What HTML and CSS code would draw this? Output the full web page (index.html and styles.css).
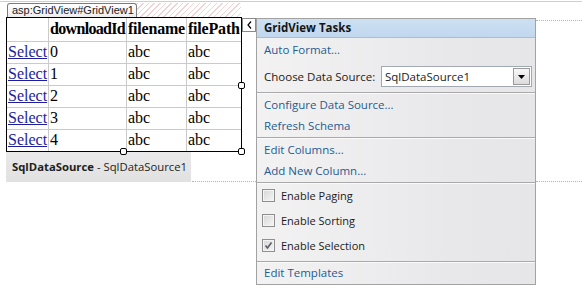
FILE: index.html
```html
<!DOCTYPE html>
<html lang="en">
<head>
    <meta charset="utf-8" />
    <title>GridView designer</title>
    <link rel="stylesheet" href="styles.css">
</head>
<body>
<div class="topline"></div>
<div class="guide guide-a"></div>
<div class="guide guide-b"></div>
<div class="guide guide-c"></div>

<div class="surface">
    <div class="tabrow">
        <span class="tab">asp:GridView#GridView1</span>
        <span class="hatch"></span>
    </div>
    <div class="grid-frame">
        <table class="grid">
            <thead>
                <tr><th>&nbsp;</th><th class="tight">downloadId</th><th>filename</th><th>filePath</th></tr>
            </thead>
            <tbody>
                <tr><td><a href="#">Select</a></td><td>0</td><td>abc</td><td>abc</td></tr>
                <tr><td><a href="#">Select</a></td><td>1</td><td>abc</td><td>abc</td></tr>
                <tr><td><a href="#">Select</a></td><td>2</td><td>abc</td><td>abc</td></tr>
                <tr><td><a href="#">Select</a></td><td>3</td><td>abc</td><td>abc</td></tr>
                <tr><td><a href="#">Select</a></td><td>4</td><td>abc</td><td>abc</td></tr>
            </tbody>
        </table>
        <span class="handle h-right"></span>
        <span class="handle h-bottom"></span>
        <span class="handle h-corner"></span>
    </div>
    <div class="datasource"><b>SqlDataSource</b> - SqlDataSource1</div>
</div>

<button class="smart-tag" type="button">
    <svg width="5" height="8" viewBox="0 0 5 8"><path d="M4 0.5 L1 4 L4 7.5" fill="none" stroke="#000" stroke-width="1.2"/></svg>
</button>

<div class="tasks">
    <div class="tasks-head">GridView Tasks</div>
    <div class="group g-first">
        <a class="task" href="#">Auto Format...</a>
        <div class="choose">
            <span>Choose Data Source:</span>
            <div class="combo">
                <span>SqlDataSource1</span>
                <span class="drop"><svg width="7" height="4" viewBox="0 0 7 4"><path d="M0 0 H7 L3.5 4 Z" fill="#000"/></svg></span>
            </div>
        </div>
    </div>
    <div class="group">
        <a class="task" href="#">Configure Data Source...</a>
        <a class="task" href="#">Refresh Schema</a>
    </div>
    <div class="group">
        <a class="task" href="#">Edit Columns...</a>
        <a class="task" href="#">Add New Column...</a>
    </div>
    <div class="group g-checks">
        <label class="check"><span class="box"></span>Enable Paging</label>
        <label class="check"><span class="box"></span>Enable Sorting</label>
        <label class="check"><span class="box"><svg width="9" height="9" viewBox="0 0 9 9"><path d="M1.5 4.5 L3.5 7 L7.5 1.5" fill="none" stroke="#5a5f66" stroke-width="1.6"/></svg></span>Enable Selection</label>
    </div>
    <div class="group g-last">
        <a class="task" href="#">Edit Templates</a>
    </div>
</div>
</body>
</html>
```

FILE: styles.css
```css
body{margin:0;width:582px;height:297px;overflow:hidden;background:#fff;position:relative;font-family:"Open Sans",sans-serif;font-size:11.5px;color:#1b1b1b}
.topline{height:1px;margin-top:1px;background:#bcd2e8}
.guide{position:absolute;height:0;border-top:1px dotted #b4b4b4}
.guide-a{top:20px;left:536px;width:46px}
.guide-b{top:181px;left:192px;width:64px}
.guide-c{top:181px;left:536px;width:46px}

.surface{padding:1px 0 0 6px;position:relative}
.tabrow{display:flex;width:235px;height:14px;align-items:stretch}
.tab{margin-left:1px;padding:0 2px 0 4px;border:1px solid #7c7c7c;border-bottom:none;border-radius:3px 3px 0 0;background:linear-gradient(#fff,#ededed);font-family:"Liberation Sans",sans-serif;font-size:11px;line-height:13px;color:#222}
.hatch{flex:1;background:repeating-linear-gradient(135deg,#f2d2d2 0 1px,#fff 1px 4px)}

.grid-frame{position:relative;display:inline-block;vertical-align:top;border:1px solid #000;background:#fff}
.grid{border-collapse:collapse;border-style:hidden;font-family:"Liberation Serif",serif;font-size:16px;color:#000}
.grid th,.grid td{border:1px solid #cacaca;padding:0 1px;text-align:left;white-space:nowrap;line-height:18px}
.grid th{letter-spacing:-0.2px}
.grid th.tight{letter-spacing:-0.7px}
.grid thead tr{height:23px}
.grid tbody tr{height:22px}
.grid a{color:#1d1d9e}

.handle{position:absolute;width:5px;height:5px;border:1px solid #000;border-radius:2px;background:#fff}
.h-right{right:-4px;top:64px}
.h-bottom{left:calc(50% - 4px);bottom:-4px}
.h-corner{right:-4px;bottom:-4px}

.datasource{width:179px;height:30px;padding-left:6px;line-height:29px;background:linear-gradient(#e9e9e9,#e1e1e1);font-size:11.3px;color:#1e1e1e}
.datasource b{font-weight:700}

.smart-tag{position:absolute;left:242px;top:18px;width:14px;height:14px;padding:0;border:1px solid #8a8a8a;background:#fff;display:flex;align-items:center;justify-content:center}

.tasks{position:absolute;left:256px;top:18px;width:278px;height:265px;border:1px solid #a2a2a2;background:linear-gradient(90deg,#f2f2f2,#ececee 45%,#e8e8ea 70%,#e6e6e8)}
.tasks-head{height:18px;line-height:18px;padding-left:7px;border-bottom:1px solid #a9bdd3;background:linear-gradient(#cde0f3,#c1d7ee);font-weight:700;font-size:11.5px;color:#151515}
.group{display:flex;flex-direction:column;padding:1px 0;border-top:1px solid #a9a9a9;box-shadow:inset 0 1px 0 #fafafa}
.tasks-head + .group{border-top:none;box-shadow:none;padding:1px 0 5px}
.task{display:block;padding-left:7px;line-height:21px;color:#1f5c92;text-decoration:none}
.choose{display:flex;align-items:center;justify-content:space-between;margin-top:6px;padding:0 3px 0 7px;height:21px}
.combo{box-sizing:border-box;width:151px;height:21px;padding-left:3px;border:1px solid #a2a9b2;background:#fff;display:flex;align-items:center;justify-content:space-between}
.drop{width:15px;height:15px;margin-right:1px;border:1px solid #9b9b9b;background:linear-gradient(#f7f7f7,#dcdcdc);display:flex;align-items:center;justify-content:center}
.g-checks{padding:0 0 3px}
.check{display:flex;align-items:center;height:25px;padding-left:5px;font-size:11px}
.box{width:11px;height:11px;margin-right:6px;border:1px solid #8e8f8f;background:linear-gradient(135deg,#d6d6d6,#f6f6f6);box-shadow:inset 0 0 0 1px #f4f4f4;display:flex;align-items:center;justify-content:center}
.g-last{padding:0 0 1px}
```
